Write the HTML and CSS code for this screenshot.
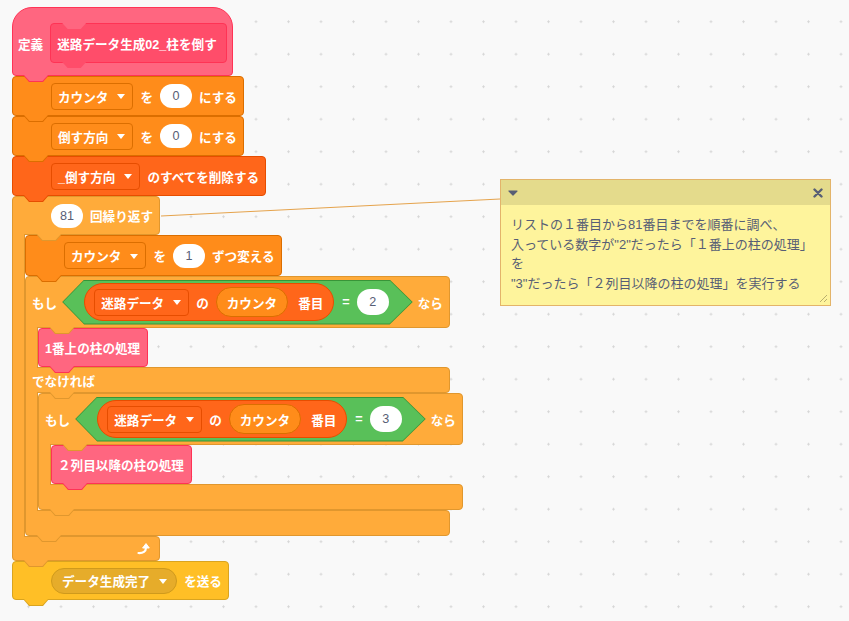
FILE: index.html
```html
<!DOCTYPE html>
<html lang="ja">
<head>
    <meta charset="UTF-8">
    <meta name="viewport" content="width=device-width, initial-scale=1.0">
    <title>迷路データ生成02_柱を倒す</title>
    <link rel="stylesheet" href="styles.css">
</head>
<body>

    <!-- thin line tying the repeat block to its note -->
    <svg class="comment-link" width="849" height="621">
        <line x1="161" y1="216" x2="500" y2="199" />
    </svg>

    <div class="script">
        <!-- define hat -->
        <div class="hat custom tab">
            <span>定義</span>
            <div class="proto">迷路データ生成02_柱を倒す</div>
        </div>

        <div class="block data tab">
            <div class="dropdown">カウンタ</div>
            <span>を</span>
            <div class="num">0</div>
            <span>にする</span>
        </div>

        <div class="block data tab">
            <div class="dropdown">倒す方向</div>
            <span>を</span>
            <div class="num">0</div>
            <span>にする</span>
        </div>

        <div class="block list tab">
            <div class="dropdown">_倒す方向</div>
            <span>のすべてを削除する</span>
        </div>

        <!-- repeat 81 -->
        <div class="c-block control">
            <div class="arm arm-top tab tab-in">
                <div class="num">81</div>
                <span>回繰り返す</span>
            </div>
            <div class="mouth">
                <div class="wall"></div>
                <div class="stack">

                    <div class="block data tab tall">
                        <div class="dropdown">カウンタ</div>
                        <span>を</span>
                        <div class="num">1</div>
                        <span>ずつ変える</span>
                    </div>

                    <!-- if / else -->
                    <div class="c-block control">
                        <div class="arm arm-top if-row tab tab-in">
                            <span>もし</span>
                            <div class="bool operator">
                                <div class="bool-in">
                                    <div class="reporter list">
                                        <div class="dropdown">迷路データ</div>
                                        <span>の</span>
                                        <div class="var data">カウンタ</div>
                                        <span>番目</span>
                                    </div>
                                    <span>=</span>
                                    <div class="num">2</div>
                                </div>
                            </div>
                            <span>なら</span>
                        </div>
                        <div class="mouth">
                            <div class="wall"></div>
                            <div class="stack">
                                <div class="block custom call tab">1番上の柱の処理</div>
                            </div>
                        </div>
                        <div class="arm arm-mid tab tab-in">
                            <span>でなければ</span>
                        </div>
                        <div class="mouth">
                            <div class="wall"></div>
                            <div class="stack">

                                <!-- nested if -->
                                <div class="c-block control">
                                    <div class="arm arm-top if-row tab tab-in">
                                        <span>もし</span>
                                        <div class="bool operator">
                                            <div class="bool-in">
                                                <div class="reporter list">
                                                    <div class="dropdown">迷路データ</div>
                                                    <span>の</span>
                                                    <div class="var data">カウンタ</div>
                                                    <span>番目</span>
                                                </div>
                                                <span>=</span>
                                                <div class="num">3</div>
                                            </div>
                                        </div>
                                        <span>なら</span>
                                    </div>
                                    <div class="mouth">
                                        <div class="wall"></div>
                                        <div class="stack">
                                            <div class="block custom call tab">２列目以降の柱の処理</div>
                                        </div>
                                    </div>
                                    <div class="arm arm-bottom tab"></div>
                                </div>

                            </div>
                        </div>
                        <div class="arm arm-bottom tab"></div>
                    </div>

                </div>
            </div>
            <div class="arm arm-bottom loop-end tab">
                <svg class="loop-arrow" width="13" height="13" viewBox="0 0 13 13">
                    <path d="M1.5 11 C6 11.3 9 9.5 9 5.5" fill="none" stroke="#fff" stroke-width="2.2" stroke-linecap="round" />
                    <path d="M5.6 6 L9 1.6 L12.3 6 Z" fill="#fff" stroke="#fff" stroke-width="1" stroke-linejoin="round" />
                </svg>
            </div>
        </div>

        <div class="block event tab">
            <div class="dropdown round">データ生成完了</div>
            <span>を送る</span>
        </div>
    </div>

    <!-- workspace note -->
    <div class="comment">
        <div class="comment-head">
            <svg width="10" height="6" viewBox="0 0 10 6">
                <path d="M1 1 L9 1 L5 5 Z" fill="#575e75" stroke="#575e75" stroke-width="1.2" stroke-linejoin="round" />
            </svg>
            <svg width="10" height="10" viewBox="0 0 10 10">
                <path d="M1.5 1.5 L8.5 8.5 M8.5 1.5 L1.5 8.5" stroke="#575e75" stroke-width="2.4" stroke-linecap="round" />
            </svg>
        </div>
        <div class="comment-body">
            リストの１番目から81番目までを順番に調べ、<br>
            入っている数字が"2"だったら「１番上の柱の処理」<br>
            を<br>
            "3"だったら「２列目以降の柱の処理」を実行する
            <svg class="resize" width="10" height="10" viewBox="0 0 10 10">
                <path d="M9 2 L2 9 M9 6 L6 9" stroke="#b8ae6e" stroke-width="1" />
            </svg>
        </div>
    </div>

</body>
</html>
```

FILE: styles.css
```css
/* workspace with the faint dot grid */
body {
    margin: 0;
    width: 100vw;
    height: 100vh;
    overflow: hidden;
    background-color: #f9f9f9;
    background-image: radial-gradient(circle, #d6d6d6 0.9px, transparent 1.4px);
    background-size: 32.5px 32.5px;
    background-position: 12.25px 5.45px;
    font-family: "Liberation Sans", "Noto Sans CJK JP", sans-serif;
}

.comment-link {
    position: absolute;
    left: 0;
    top: 0;
}

.comment-link line {
    stroke: #e5a34c;
    stroke-width: 1;
}

/* category colours */
.custom   { --fill: #ff6680; --edge: #ff3355; }
.data     { --fill: #ff8c1a; --edge: #db6e00; }
.list     { --fill: #ff661a; --edge: #e64d00; }
.control  { --fill: #ffab3a; --edge: #e0972e; }
.event    { --fill: #ffbf26; --edge: #d9a420; }
.operator { --fill: #59c059; --edge: #389438; }

/* one script stacked top to bottom */
.script {
    position: absolute;
    left: 12px;
    top: 7px;
    display: flex;
    flex-direction: column;
    align-items: flex-start;
}

.script,
.stack {
    color: #fff;
    font-size: 12.6px;
    font-weight: 700;
    white-space: nowrap;
}

.stack {
    display: flex;
    flex-direction: column;
    align-items: flex-start;
    flex: 1 1 0;
    min-width: 0;
}

.script > *,
.stack > * {
    flex: none;
    width: max-content;
}

/* plain stack block */
.block {
    position: relative;
    box-sizing: border-box;
    height: 40px;
    display: flex;
    align-items: center;
    gap: 7px;
    padding: 0 6px 0 38px;
    background: var(--fill);
    border: 1px solid var(--edge);
    border-radius: 4px;
}

.block.tall {
    height: 41px;
}

.block.call {
    height: 39px;
    padding: 0 7px 0 6px;
}

.block.event {
    height: 39px;
}

/* define hat */
.hat {
    position: relative;
    box-sizing: border-box;
    height: 69px;
    display: flex;
    align-items: center;
    gap: 7px;
    padding: 3px 5px 0 5px;
    background: var(--fill);
    border: 1px solid var(--edge);
    border-radius: 20px 20px 4px 4px;
}

.proto {
    position: relative;
    box-sizing: border-box;
    height: 40px;
    display: flex;
    align-items: center;
    padding: 0 9px 0 6px;
    background: #ff4d6a;
    border: 1px solid #ff3355;
    border-radius: 4px;
}

/* notch cut into the top of the prototype */
.proto::before {
    content: '';
    position: absolute;
    left: 11px;
    top: -1px;
    width: 24px;
    height: 6px;
    background: #ff6680;
    clip-path: polygon(0 0, 100% 0, 18.5px 100%, 5.5px 100%);
}

.proto::after {
    content: '';
    position: absolute;
    left: 11px;
    top: 100%;
    width: 24px;
    height: 6px;
    background: #ff4d6a;
    clip-path: polygon(0 0, 100% 0, 18.5px 100%, 5.5px 100%);
    z-index: 3;
}

/* tab under every block, sits over the next block's notch */
.tab::before,
.tab::after {
    content: '';
    position: absolute;
    top: 100%;
}

.tab::before {
    left: 10px;
    width: 26px;
    height: 7px;
    background: var(--edge);
    clip-path: polygon(0 0, 100% 0, 20px 100%, 6px 100%);
    z-index: 2;
}

.tab::after {
    left: 11px;
    width: 24px;
    height: 6px;
    background: var(--fill);
    clip-path: polygon(0 0, 100% 0, 18.5px 100%, 5.5px 100%);
    z-index: 3;
}

.tab-in::before { left: 23px; }
.tab-in::after  { left: 24px; }

/* C blocks: arms plus a left wall */
.c-block {
    display: flex;
    flex-direction: column;
}

.arm {
    position: relative;
    box-sizing: border-box;
    display: flex;
    align-items: center;
    gap: 7px;
    background: var(--fill);
    border: 1px solid var(--edge);
}

.arm-top {
    height: 39px;
    padding: 0 6px 0 38px;
    border-radius: 4px 4px 4px 0;
}

.arm-top.if-row {
    height: 52px;
    padding: 0 6px 0 6px;
    gap: 5px;
}

.arm-mid {
    height: 26px;
    padding: 0 6px;
    border-radius: 0 4px 4px 0;
}

.arm-bottom {
    height: 26px;
    border-radius: 0 4px 4px 4px;
}

.arm-bottom.loop-end {
    height: 25px;
    justify-content: flex-end;
    padding-right: 9px;
}

.loop-arrow {
    margin-top: -1px;
}

.mouth {
    display: flex;
    width: 0;
    min-width: 100%;
}

.wall {
    position: relative;
    z-index: 1;
    box-sizing: border-box;
    flex: none;
    width: 13px;
    margin: -1px 0;
    background: var(--fill);
    border-left: 1px solid var(--edge);
    border-right: 1px solid var(--edge);
}

/* inputs */
.dropdown {
    box-sizing: border-box;
    height: 27px;
    display: flex;
    align-items: center;
    gap: 9px;
    padding: 0 7px 0 6px;
    background: var(--fill);
    border: 1px solid var(--edge);
    border-radius: 4px;
}

.dropdown::after {
    content: '';
    border-left: 4px solid transparent;
    border-right: 4px solid transparent;
    border-top: 5px solid #fff;
    margin-top: 1px;
}

.dropdown.round {
    height: 26px;
    padding: 0 9px 0 10px;
    border-radius: 13px;
    background: #e6ac2a;
    border-color: #cf9a1c;
}

.num {
    box-sizing: border-box;
    min-width: 32px;
    height: 24px;
    padding: 0 9px;
    display: flex;
    align-items: center;
    justify-content: center;
    background: #fff;
    border-radius: 12px;
    color: #575e75;
    font-weight: 400;
}

/* boolean hexagon */
.bool {
    height: 45px;
    padding: 1px;
    box-sizing: border-box;
    background: var(--edge);
    clip-path: polygon(0 50%, 22px 0, calc(100% - 23px) 0, 100% 50%, calc(100% - 23px) 100%, 22px 100%);
}

.bool-in {
    height: 100%;
    display: flex;
    align-items: center;
    gap: 6px;
    padding: 0 23px 0 21px;
    background: var(--fill);
    clip-path: polygon(0 50%, 21px 0, calc(100% - 22px) 0, 100% 50%, calc(100% - 22px) 100%, 21px 100%);
}

.bool-in > .num {
    height: 26px;
    border-radius: 13px;
}

.bool-in > span {
    margin: 0 1px 0 2px;
}

.reporter {
    box-sizing: border-box;
    height: 38px;
    display: flex;
    align-items: center;
    gap: 7px;
    padding: 0 10px 0 9px;
    background: var(--fill);
    border: 1px solid var(--edge);
    border-radius: 19px;
}

.var {
    box-sizing: border-box;
    height: 30px;
    display: flex;
    align-items: center;
    padding: 0 10px;
    margin-right: 3px;
    background: var(--fill);
    border: 1px solid var(--edge);
    border-radius: 15px;
}

/* note */
.comment {
    position: absolute;
    left: 500px;
    top: 179px;
    width: 331px;
    height: 127px;
    box-sizing: border-box;
    display: flex;
    flex-direction: column;
    background: #fef49c;
    border: 1px solid #e3b46a;
}

.comment-head {
    flex: none;
    height: 25px;
    display: flex;
    align-items: center;
    justify-content: space-between;
    padding: 0 7px 0 7px;
    background: #e4db8c;
}

.comment-body {
    position: relative;
    flex: 1;
    padding: 10px 10px 0 10px;
    color: #575e75;
    font-family: "Liberation Sans", "Noto Sans CJK JP", sans-serif;
    font-size: 13px;
    line-height: 19.7px;
    white-space: nowrap;
}

.resize {
    position: absolute;
    right: 2px;
    bottom: 2px;
}
```
